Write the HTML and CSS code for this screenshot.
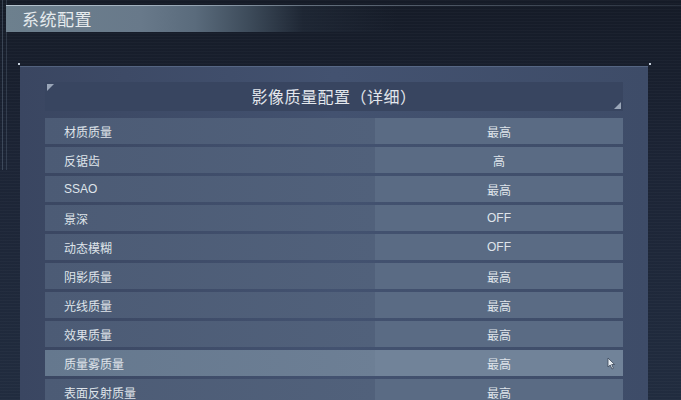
FILE: index.html
```html
<!DOCTYPE html>
<html lang="zh-CN">
<head>
    <meta charset="UTF-8">
    <title>系统配置</title>
    <link rel="stylesheet" href="styles.css">
</head>
<body>
    <div class="screen">
        <div class="frame-line"></div>
        <div class="titlebar">
            <h1 class="title">系统配置</h1>
        </div>
        <div class="panel">
            <span class="dot dot-left"></span>
            <span class="dot dot-right"></span>
            <div class="panel-head">影像质量配置（详细）</div>
            <div class="rows">
                <div class="row"><div class="label">材质质量</div><div class="value">最高</div></div>
                <div class="row"><div class="label">反锯齿</div><div class="value">高</div></div>
                <div class="row"><div class="label">SSAO</div><div class="value">最高</div></div>
                <div class="row"><div class="label">景深</div><div class="value">OFF</div></div>
                <div class="row"><div class="label">动态模糊</div><div class="value">OFF</div></div>
                <div class="row"><div class="label">阴影质量</div><div class="value">最高</div></div>
                <div class="row"><div class="label">光线质量</div><div class="value">最高</div></div>
                <div class="row"><div class="label">效果质量</div><div class="value">最高</div></div>
                <div class="row hover">
                    <div class="label">质量雾质量</div>
                    <div class="value">最高
                        <svg class="cursor" width="9" height="13" viewBox="0 0 9 13">
                            <path d="M1 1 L1 10 L3.2 8 L5 12 L6.4 11.3 L4.7 7.5 L7.6 7.5 Z" fill="#e8edf2" stroke="#3a4658" stroke-width="0.8"/>
                        </svg>
                    </div>
                </div>
                <div class="row"><div class="label">表面反射质量</div><div class="value">最高</div></div>
            </div>
        </div>
    </div>
</body>
</html>
```

FILE: styles.css
```css
* {
    margin: 0;
    padding: 0;
    box-sizing: border-box;
}
body {
    width: 681px;
    height: 400px;
    overflow: hidden;
    font-family: "Liberation Sans", "Noto Sans CJK SC", sans-serif;
    background: #1a2231;
}
.screen {
    position: relative;
    height: 400px;
    padding-top: 5px;
    background:
        repeating-linear-gradient(to bottom, rgba(255, 255, 255, 0.025) 0 1px, rgba(0, 0, 0, 0) 1px 3px),
        linear-gradient(to bottom, #151b27 0%, #1c2435 40%, #212c3f 100%);
}
.frame-line {
    position: absolute;
    left: 2px;
    top: 0;
    width: 5px;
    height: 170px;
    border-left: 1px solid rgba(120, 140, 160, 0.35);
    border-right: 1px solid rgba(120, 140, 160, 0.25);
}
.titlebar {
    position: relative;
    margin-left: 6px;
    height: 27px;
    background: linear-gradient(to right, #6d808e 0%, #68798a 20%, #5a6b7c 28%, #3d4b5a 36%, rgba(36, 46, 60, 0.55) 44%, rgba(0, 0, 0, 0) 58%);
    display: flex;
    align-items: center;
    padding-left: 16px;
}
/* thin highlight along the top edge, fading out to the right */
.titlebar::before {
    content: '';
    position: absolute;
    left: 0;
    right: 0;
    top: 0;
    height: 1px;
    background: linear-gradient(to right, rgba(200, 212, 222, 0.8) 0%, rgba(170, 185, 200, 0.5) 45%, rgba(120, 135, 150, 0.2) 100%);
}
.title {
    font-size: 17px;
    font-weight: normal;
    color: #e6ebee;
    letter-spacing: 0.5px;
}
.panel {
    position: relative;
    margin: 34px 0 0 20px;
    width: 628px;
    height: 340px;
    padding: 16px 25px 0;
    background: linear-gradient(to right, #3a4661 0%, #435270 50%, #3e4c68 100%);
    box-shadow: inset 0 1px 0 rgba(120, 140, 170, 0.4);
}
.dot {
    position: absolute;
    top: -3px;
    width: 2px;
    height: 2px;
    background: #c6d0dc;
}
.dot-left {
    left: -2px;
}
.dot-right {
    right: -3px;
}
.panel-head {
    position: relative;
    height: 29px;
    background: #384560;
    color: #e3e7ed;
    font-size: 16px;
    display: flex;
    align-items: center;
    justify-content: center;
    letter-spacing: 0.5px;
    padding-bottom: 1px;
}
.panel-head::before,
.panel-head::after {
    content: '';
    position: absolute;
    width: 0;
    height: 0;
    border-style: solid;
}
.panel-head::before {
    left: 2px;
    top: 2px;
    border-width: 7px 7px 0 0;
    border-color: #9aa6b8 transparent transparent transparent;
}
.panel-head::after {
    right: 2px;
    bottom: 2px;
    border-width: 0 0 7px 7px;
    border-color: transparent transparent #9aa6b8 transparent;
}
.rows {
    display: flex;
    flex-direction: column;
    gap: 3px;
    margin-top: 7px;
}
.row {
    display: flex;
    height: 26px;
    font-size: 12px;
    color: #dfe4ea;
}
.label {
    width: 330px;
    padding-left: 19px;
    display: flex;
    align-items: center;
    background: linear-gradient(to right, #4c5b75, #51617b);
}
.value {
    position: relative;
    flex: 1;
    display: flex;
    align-items: center;
    justify-content: center;
    background: #5a6b84;
}
.row.hover .label {
    background: linear-gradient(to right, #65788e, #6d7f95);
}
.row.hover .value {
    background: #718399;
}
.cursor {
    position: absolute;
    right: 7px;
    top: 7px;
}
```
